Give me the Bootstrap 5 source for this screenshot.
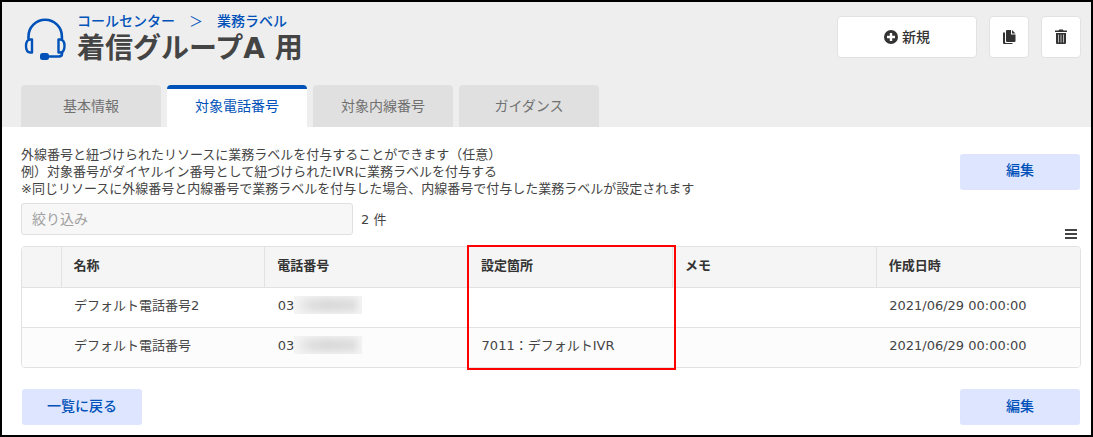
<!DOCTYPE html>
<html lang="ja">
<head>
<meta charset="utf-8">
<meta name="viewport" content="width=device-width, initial-scale=1">
<title>着信グループA 用</title>
<link href="https://cdn.jsdelivr.net/npm/bootstrap@5.3.0/dist/css/bootstrap.min.css" rel="stylesheet">
<style>
  body { font-family: "DejaVu Sans", "Noto Sans CJK JP", sans-serif; font-size: 13px; line-height: 17px; color: #444; }
  .app-frame { border: 2px solid #000; }
  .app-header { background: #eee; padding: 9px 10px 0 19px; }
  .app-main { padding: 19px 10px 10px 19px; }
  .head-row { min-height: 74px; }
  .head-icon { margin: 7px 9px 0 3px; }
  .crumbs { font-size: 14px; line-height: 20px; gap: 14px; color: #0052b9; }
  .crumbs a { color: #0052b9; font-weight: 500; }
  .page-title { font-size: 28px; line-height: 36px; font-weight: 700; color: #444; }
  .head-actions { gap: 12px; padding-top: 5px; }
  .btn-tool { background: #fff; border: 1px solid #e2e2e2; border-radius: 4px; height: 42px; width: 40px; color: #333; font-size: 14px; font-weight: 500; }
  .btn-new { width: 140px; }
  .page-tabs { gap: 6px; }
  .page-tabs .nav-link { width: 140px; height: 42px; padding: 0; border-radius: 4px 4px 0 0; border-top: 4px solid #e0e0e0; background: #e0e0e0; color: #707070; font-size: 14px; line-height: 34px; text-align: center; }
  .page-tabs .nav-link.active { background: #fff; border-top-color: #0052b9; color: #0052b9; }
  .btn-soft { width: 120px; height: 36px; padding: 0 0 2px; border: 0; border-radius: 3px; background: #dee6ff; color: #0052b9; font-size: 14px; font-weight: 500; }
  .intro-row { padding-right: 1px; }
  .filter-row { min-height: 43px; margin-top: 6px; }
  .filter-box { width: 332px; height: 32px; padding: 0 10px; border: 1px solid #e0e0e0; border-radius: 3px; background: #f7f7f7; font-size: 14px; }
  .filter-box::placeholder { color: #a0a0a0; }
  .btn-menu { width: 20px; height: 20px; margin-bottom: 2px; color: #444; }
  .grid-box { border: 1px solid #e2e2e2; border-radius: 4px; }
  .grid-table { table-layout: fixed; color: #444; }
  .grid-table th, .grid-table td { height: 40px; padding: 0 0 2px 12px; vertical-align: middle; border: 0; }
  .grid-table th { background: #f5f5f5; font-weight: 700; color: #333; }
  .grid-table th + th { border-left: 1px solid #e2e2e2; }
  .grid-table td { padding: 0 0 4px 13px; }
  .grid-table tbody tr { border-top: 1px solid #e2e2e2; }
  .grid-table tbody tr:nth-child(2) td { background: #fcfcfc; }
  .col-check { width: 39px; }
  .masked { width: 68px; height: 18px; background: linear-gradient(90deg, #f4f4f4, #e0e0e0 25%, #dadada 50%, #dedede 85%, #eee); box-shadow: inset 0 0 6px 2px #f4f4f4; }
  .callout-box { top: -1px; bottom: -2px; left: calc(38px + (100% - 40px) * .4); width: calc((100% - 40px) * .2 + 5px); border: 2px solid #f00; pointer-events: none; }
  .page-foot { margin-top: 21px; padding: 0 1px; }
</style>
</head>
<body>
<div class="app-frame min-vh-100">
  <header class="app-header">
    <div class="head-row d-flex justify-content-between align-items-start">
      <div class="d-flex">
        <svg class="head-icon flex-shrink-0" width="44" height="44" viewBox="0 0 44 44" fill="none" stroke="#0052b9" stroke-width="2.6" aria-hidden="true">
          <path d="M4.500 21V18.500a16.700 16.700 0 0 1 33.400 0V21M38 33v2.500q0 3-3 3H25"/>
          <path d="M8 21.500H6.500q-4.500 0-4.500 6.500t4.500 6.500H8zM34.500 21.500H36q4.500 0 4.500 6.500t-4.500 6.500h-1.500z" stroke-width="2.400" stroke-linejoin="round"/>
          <rect x="16" y="35" width="9" height="7" rx="2.500" fill="#0052b9" stroke="none"/>
        </svg>
        <div>
          <nav class="crumbs d-flex" aria-label="階層">
            <a class="text-decoration-none" href="#">コールセンター</a><span>＞</span><a class="text-decoration-none" href="#">業務ラベル</a>
          </nav>
          <h1 class="page-title mb-0">着信グループA 用</h1>
        </div>
      </div>
      <div class="head-actions d-flex">
        <button type="button" class="btn btn-tool btn-new d-flex align-items-center justify-content-center gap-1 p-0">
          <svg width="14" height="14" viewBox="0 0 14 14" aria-hidden="true"><circle cx="7" cy="7" r="7" fill="#333"/><path d="M7 3v8M3 7h8" stroke="#fff" stroke-width="2.400"/></svg>新規
        </button>
        <button type="button" class="btn btn-tool d-flex align-items-center justify-content-center p-0" aria-label="コピー">
          <svg width="14" height="16" viewBox="0 0 14 16" fill="#333" aria-hidden="true"><path d="M5 1h4v4.500h4.500V12q0 1-1 1H5q-1 0-1-1V2q0-1 1-1zM10 1l3.500 3.500H10zM1 3.500h2V13q0 1 1 1h6.500v1H2q-1 0-1-1z"/></svg>
        </button>
        <button type="button" class="btn btn-tool d-flex align-items-center justify-content-center p-0" aria-label="削除">
          <svg width="14" height="16" viewBox="0 0 14 16" aria-hidden="true"><path d="M1 1.500h3.500l.7-1h3.600l.7 1H13V3H1zM2 4h10v10q0 1-1 1H3q-1 0-1-1z" fill="#333"/><path d="M4.500 5.500v8M7 5.500v8M9.500 5.500v8" stroke="#ddd" stroke-width=".8"/></svg>
        </button>
      </div>
    </div>
    <ul class="page-tabs nav">
      <li class="nav-item"><a class="nav-link" href="#">基本情報</a></li>
      <li class="nav-item"><a class="nav-link active" aria-current="page" href="#">対象電話番号</a></li>
      <li class="nav-item"><a class="nav-link" href="#">対象内線番号</a></li>
      <li class="nav-item"><a class="nav-link" href="#">ガイダンス</a></li>
    </ul>
  </header>
  <main class="app-main">
    <div class="intro-row d-flex justify-content-between align-items-center">
      <p class="mb-0">外線番号と紐づけられたリソースに業務ラベルを付与することができます（任意）<br>例）対象番号がダイヤルイン番号として紐づけられたIVRに業務ラベルを付与する<br>※同じリソースに外線番号と内線番号で業務ラベルを付与した場合、内線番号で付与した業務ラベルが設定されます</p>
      <button type="button" class="btn btn-soft flex-shrink-0">編集</button>
    </div>
    <div class="filter-row d-flex justify-content-between">
      <div class="d-flex align-items-center align-self-start gap-2">
        <input type="text" class="form-control filter-box" placeholder="絞り込み" aria-label="絞り込み">
        <span class="text-nowrap">2 件</span>
      </div>
      <button type="button" class="btn btn-menu p-0 border-0 d-flex align-items-center justify-content-center align-self-end" aria-label="表示項目">
        <svg width="12" height="12" viewBox="0 0 12 12" stroke="currentColor" stroke-width="2" aria-hidden="true"><path d="M0 2h12M0 6h12M0 10h12"/></svg>
      </button>
    </div>
    <div class="position-relative">
      <div class="grid-box overflow-hidden">
        <table class="table grid-table mb-0">
          <colgroup><col class="col-check"><col><col><col><col><col></colgroup>
          <thead>
            <tr><th></th><th scope="col">名称</th><th scope="col">電話番号</th><th scope="col">設定箇所</th><th scope="col">メモ</th><th scope="col">作成日時</th></tr>
          </thead>
          <tbody>
            <tr><td></td><td>デフォルト電話番号2</td><td><div class="d-flex align-items-center">03<span class="masked"></span></div></td><td></td><td></td><td>2021/06/29 00:00:00</td></tr>
            <tr><td></td><td>デフォルト電話番号</td><td><div class="d-flex align-items-center">03<span class="masked"></span></div></td><td>7011：デフォルトIVR</td><td></td><td>2021/06/29 00:00:00</td></tr>
          </tbody>
        </table>
      </div>
      <div class="callout-box position-absolute"></div>
    </div>
    <div class="page-foot d-flex justify-content-between">
      <button type="button" class="btn btn-soft">一覧に戻る</button>
      <button type="button" class="btn btn-soft">編集</button>
    </div>
  </main>
</div>
<script src="https://cdn.jsdelivr.net/npm/bootstrap@5.3.0/dist/js/bootstrap.bundle.min.js"></script>
</body>
</html>
